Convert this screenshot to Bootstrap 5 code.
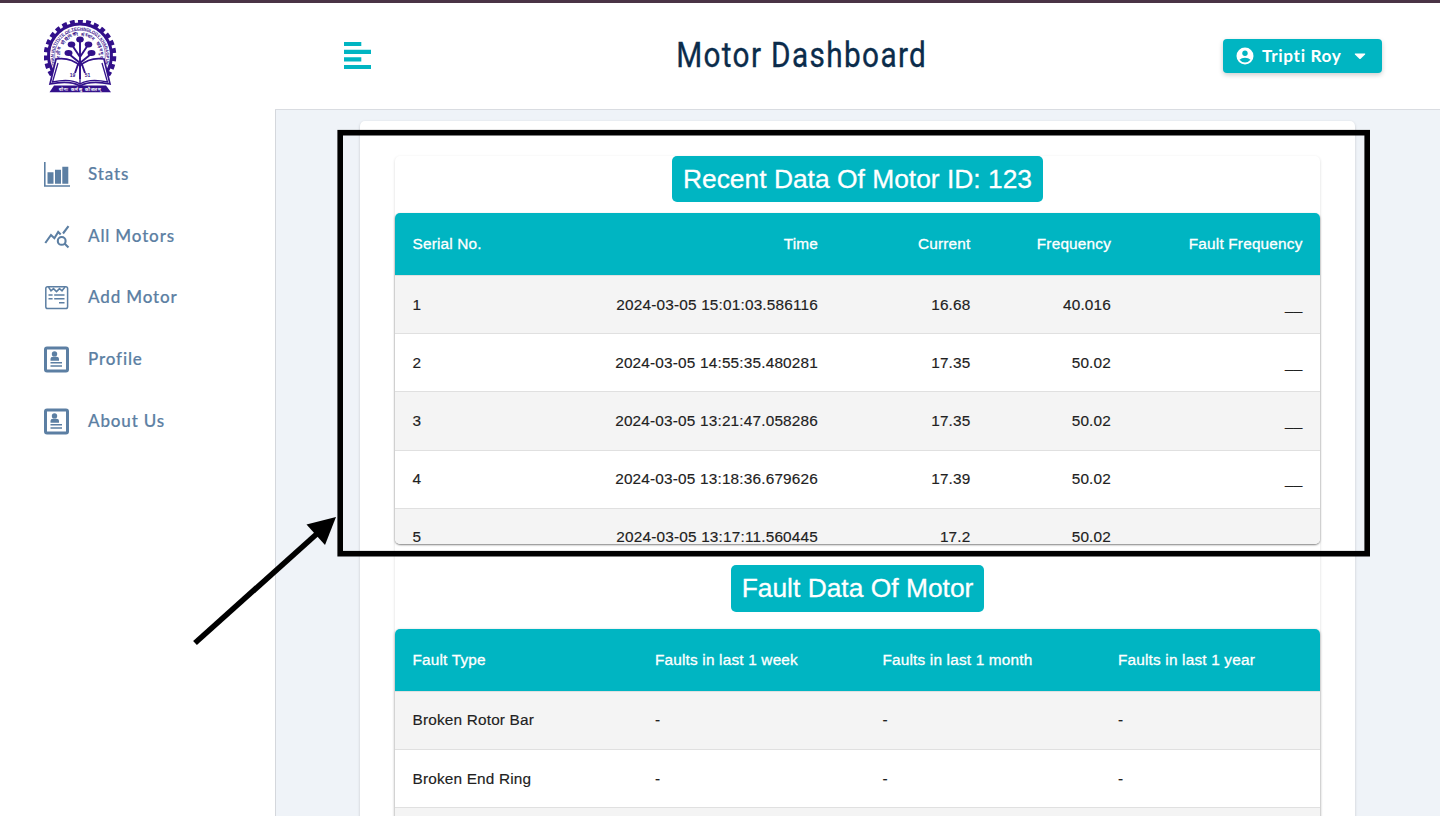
<!DOCTYPE html>
<html lang="en">
<head>
<meta charset="utf-8">
<meta name="viewport" content="width=device-width, initial-scale=1">
<title>Motor Dashboard</title>
<link href="https://cdn.jsdelivr.net/npm/bootstrap@5.3.0/dist/css/bootstrap.min.css" rel="stylesheet">
<style>
:root{--teal:#00b5c2;--slate:#5c7fa3}
body{font-family:"Liberation Sans",Arial,sans-serif;background:#fff;color:#212121;height:816px;overflow:hidden}
.shell{height:816px;border-top:3px solid #4a3446}
.side{width:275px;padding:17px 44px 0}
.side-nav{margin-top:50.500px}
.side-nav .nav-link{height:61.75px;padding:0;gap:18px;color:var(--slate);font:500 17px/24px Lato,sans-serif;letter-spacing:.85px;-webkit-text-stroke:.2px var(--slate)}
.side-nav span{margin-top:-1px}
.side-nav svg{width:27px;height:27px;margin-left:-1px}
.top{height:107px;padding:0 58px 0 69px;border-bottom:1px solid #d9dce1}
.title-wrap{width:250px;height:50px;margin:-2px 0 0 9px}
.page-title{font:400 35px Roboto,sans-serif;letter-spacing:1.6px;color:#0b2c4b;transform:scaleX(.85);white-space:nowrap;-webkit-text-stroke:.35px #0b2c4b}
.btn-user{width:159px;height:34px;background:var(--teal);color:#fff;border-radius:4px;font:700 17.2px Lato,sans-serif;letter-spacing:.65px;padding:0 11px 0 12px;box-shadow:0 2px 5px rgba(0,0,0,.2)}
.btn-user:hover{background:#009daa;color:#fff}
.btn-user span{margin-top:-2px}
.canvas{background:#eff3f8;border-left:1px solid #d4d7dc;padding:11px 85px 0 84px;overflow:hidden}
.panel{background:#fff;border-radius:5px;padding:35px;height:900px;box-shadow:0 1px 3px rgba(0,0,0,.18)}
.sheet{width:925px;border-radius:5px;box-shadow:0 1px 3px rgba(0,0,0,.16);height:850px}
.chip-title{height:46px;background:var(--teal);color:#fff;border-radius:5px;font-size:26.4px;line-height:46px;margin:0;font-weight:400;text-align:center;-webkit-text-stroke:.3px #fff;white-space:nowrap}
.scroller{height:331px;margin-top:11px;border-radius:5px;overflow:hidden;box-shadow:0 1px 2px rgba(0,0,0,.5)}
.faults{margin-top:17px;border-radius:5px;overflow:hidden;box-shadow:0 1px 3px rgba(0,0,0,.35)}
.grid-table{table-layout:fixed;font-size:15.36px;letter-spacing:.18px;line-height:22px;margin:0;border-collapse:separate;border-spacing:0;width:925px}
.grid-table th{height:63px;padding:0 17.5px 1px;background:var(--teal);color:#fff;font-weight:400;vertical-align:middle;border:0;border-bottom:1px solid #e0e0e0;-webkit-text-stroke:.3px #fff}
.grid-table td{height:58.2px;padding:0 17.5px;vertical-align:middle;border:0;border-bottom:1px solid #e0e0e0;color:#212121;background:#fff;-webkit-text-stroke:.15px #212121}
.grid-table tr:nth-child(odd) td{background:#f4f4f4}
.faults tbody tr:first-child td{padding-bottom:2px}
.callout{position:absolute;inset:0;pointer-events:none}
</style>
</head>
<body>
<div class="shell d-flex">
  <aside class="side flex-shrink-0">
    <svg class="d-block" width="73" height="73" viewBox="0 0 73 73" fill="none" stroke="#32108a">
      <path d="M8 55A34 34 0 1 1 64 55" stroke-width="4.6" pathLength="37" stroke-dasharray="1.200 .8"/>
      <path d="M10.500 54A31.500 31.500 0 1 1 61.500 54" stroke-width="3"/>
      <path id="ringA" d="M12.500 48A26.200 26.200 0 1 1 59.500 48" stroke="none"/>
      <path id="ringB" d="M16.500 42A20.400 20.400 0 1 1 55.500 42" stroke="none"/>
      <path d="M13 46A25.300 25.300 0 1 1 59 46" stroke-width=".5"/>
      <g fill="#32108a" stroke="none" font-family="Liberation Sans, sans-serif" font-weight="700">
        <text font-size="4.2"><textPath href="#ringA" textLength="102">INDIAN INSTITUTE OF TECHNOLOGY KHARAGPUR</textPath></text>
        <text font-size="4.6"><textPath href="#ringB" textLength="72">भारतीय प्रौद्योगिकी संस्थान खड़गपुर</textPath></text>
      </g>
      <path d="M12 39Q27 37 36 46Q45 37 60 39L66 64Q46 60 36 66Q26 60 6 64Z" fill="#fff" stroke-width="1.7"/>
      <path d="M14 43L8.500 62Q26 58 36 64Q46 58 63.500 62L58 43M36 46V65" stroke-width="1.3"/>
      <path d="M36 59V33M36 43L25 34M36 43L47 34M36 37L28 25M36 37L44 25M36 34V20M31 53L34.500 43M41 53L37.500 43" stroke-width="1.9"/>
      <g fill="#32108a" stroke="none"><ellipse cx="36" cy="19.500" rx="3.8" ry="3"/><ellipse cx="27.500" cy="24.500" rx="3.8" ry="3"/><ellipse cx="44.500" cy="24.500" rx="3.8" ry="3"/><ellipse cx="24.500" cy="33" rx="4" ry="3"/><ellipse cx="47.500" cy="33" rx="4" ry="3"/></g>
      <g fill="#32108a" stroke="none" font-size="5" font-weight="700" text-anchor="middle"><text x="28.500" y="57">19</text><text x="43.500" y="57">51</text></g>
      <path d="M10 65.500H62L67 72.300H5.500Z" fill="#32108a" stroke="none"/>
      <text x="36" y="70.800" font-size="4.6" font-weight="700" fill="#fff" stroke="none" text-anchor="middle" textLength="42">योगः कर्मसु कौशलम्</text>
    </svg>
    <nav class="side-nav nav flex-column flex-nowrap">
      <a class="nav-link d-flex align-items-center" href="#">
        <svg viewBox="0 0 27 27" fill="#5c7fa3"><path d="M1 1h1.600v23.300H27v1.500H1zM4.500 11.300h6v11.400H4.500zM12 8.800h6v13.900H12zM19.300 5.700h6v17h-6z"/></svg><span>Stats</span></a>
      <a class="nav-link d-flex align-items-center" href="#">
        <svg viewBox="0 0 27 27" fill="none" stroke="#5c7fa3" stroke-width="2.1"><path d="M2.300 20L8 12l3.400 3.200L15.200 9l2.500 2.500M20 10.500L25.500 3.200M21.500 20.500L25.500 24.500"/><circle cx="18.700" cy="17.900" r="3.900"/></svg><span>All Motors</span></a>
      <a class="nav-link d-flex align-items-center" href="#">
        <svg viewBox="0 0 27 27" fill="none" stroke="#5c7fa3" stroke-width="1.5"><rect x="2.800" y="2.800" width="21.800" height="21.800" rx="1.800"/><path d="M5.500 3l2.500 3.800 2.500-2.200 3 3 3-3 2.500 2.200L22 3M5.500 11H9.600M11.200 11H21.500M5.500 14.800H9.600M11.200 14.800H21.500M16 18.800H21.500"/></svg><span>Add Motor</span></a>
      <a class="nav-link d-flex align-items-center" href="#">
        <svg viewBox="0 0 27 27" fill="#5c7fa3"><rect x="2.500" y="2" width="22" height="23" rx="1.500" fill="none" stroke="#5c7fa3" stroke-width="3"/><circle cx="11.500" cy="7.900" r="2.700"/><path d="M7.500 14.700v-1.900q0-2 2.500-2h3.500q2.500 0 2.500 2v1.900zM7.500 16h11.500v1.500H7.500zM7.500 19.200h11.500v1.500H7.500z"/></svg><span>Profile</span></a>
      <a class="nav-link d-flex align-items-center" href="#">
        <svg viewBox="0 0 27 27" fill="#5c7fa3"><rect x="2.500" y="2" width="22" height="23" rx="1.500" fill="none" stroke="#5c7fa3" stroke-width="3"/><circle cx="11.500" cy="7.900" r="2.700"/><path d="M7.500 14.700v-1.900q0-2 2.500-2h3.500q2.500 0 2.500 2v1.900zM7.500 16h11.500v1.500H7.500zM7.500 19.200h11.500v1.500H7.500z"/></svg><span>About Us</span></a>
    </nav>
  </aside>
  <div class="flex-grow-1 d-flex flex-column">
    <header class="top d-flex align-items-center justify-content-between flex-shrink-0">
      <svg width="28" height="28" viewBox="0 0 28 28" fill="#00b5c2"><path d="M0 0h17.300v4H0zM0 7.700h27v4.200H0zM0 15.200h17.300v4.200H0zM0 23h27v4H0z"/></svg>
      <div class="title-wrap d-flex align-items-center justify-content-center"><h1 class="page-title m-0">Motor Dashboard</h1></div>
      <button class="btn btn-user d-flex align-items-center" type="button">
        <svg width="18" height="18" viewBox="0 0 18 18" class="me-2"><circle cx="9" cy="9" r="8.500" fill="#fff"/><circle cx="9" cy="6.300" r="2.700" fill="#00b5c2"/><path d="M3.500 12.800Q5.500 10.800 9 10.800T14.500 12.800Q12.500 15.500 9 15.500T3.500 12.800Z" fill="#00b5c2"/></svg>
        <span>Tripti Roy</span>
        <svg width="12" height="7" viewBox="0 0 12 7" class="ms-auto me-1"><path d="M1 .5h10q.6.3 0 1L6.700 5.800q-.7.6-1.400 0L1 1.500q-.6-.7 0-1z" fill="#fff"/></svg>
      </button>
    </header>
    <main class="canvas flex-grow-1">
      <section class="panel">
        <div class="sheet">
          <div class="d-flex justify-content-center"><h2 class="chip-title" style="width:371px">Recent Data Of Motor ID: 123</h2></div>
          <div class="scroller">
            <table class="grid-table text-end">
              <colgroup><col style="width:185px"><col style="width:255.5px"><col style="width:152.5px"><col style="width:140.5px"><col style="width:191.5px"></colgroup>
              <thead><tr><th class="text-start">Serial No.</th><th>Time</th><th>Current</th><th>Frequency</th><th>Fault Frequency</th></tr></thead>
              <tbody>
                <tr><td class="text-start">1</td><td>2024-03-05 15:01:03.586116</td><td>16.68</td><td>40.016</td><td>__</td></tr>
                <tr><td class="text-start">2</td><td>2024-03-05 14:55:35.480281</td><td>17.35</td><td>50.02</td><td>__</td></tr>
                <tr><td class="text-start">3</td><td>2024-03-05 13:21:47.058286</td><td>17.35</td><td>50.02</td><td>__</td></tr>
                <tr><td class="text-start">4</td><td>2024-03-05 13:18:36.679626</td><td>17.39</td><td>50.02</td><td>__</td></tr>
                <tr><td class="text-start">5</td><td>2024-03-05 13:17:11.560445</td><td>17.2</td><td>50.02</td><td></td></tr>
              </tbody>
            </table>
          </div>
          <div class="d-flex justify-content-center" style="margin-top:21px"><h2 class="chip-title" style="width:253px;height:47px">Fault Data Of Motor</h2></div>
          <div class="faults">
            <table class="grid-table">
              <colgroup><col style="width:242.5px"><col style="width:227.5px"><col style="width:235.5px"><col style="width:219.5px"></colgroup>
              <thead><tr><th>Fault Type</th><th>Faults in last 1 week</th><th>Faults in last 1 month</th><th>Faults in last 1 year</th></tr></thead>
              <tbody>
                <tr><td>Broken Rotor Bar</td><td>-</td><td>-</td><td>-</td></tr>
                <tr><td>Broken End Ring</td><td>-</td><td>-</td><td>-</td></tr>
                <tr><td></td><td></td><td></td><td></td></tr>
              </tbody>
            </table>
          </div>
        </div>
      </section>
    </main>
  </div>
</div>
<svg class="callout" width="1440" height="816" viewBox="0 0 1440 816">
  <rect x="340.200" y="132.700" width="1027" height="421" fill="none" stroke="#000" stroke-width="5.600"/>
  <path d="M195 643L320 531" stroke="#000" stroke-width="5.600"/>
  <path d="M336 517L306.500 524.500L325 545Z"/>
</svg>
<script src="https://cdn.jsdelivr.net/npm/bootstrap@5.3.0/dist/js/bootstrap.bundle.min.js"></script>
</body>
</html>
